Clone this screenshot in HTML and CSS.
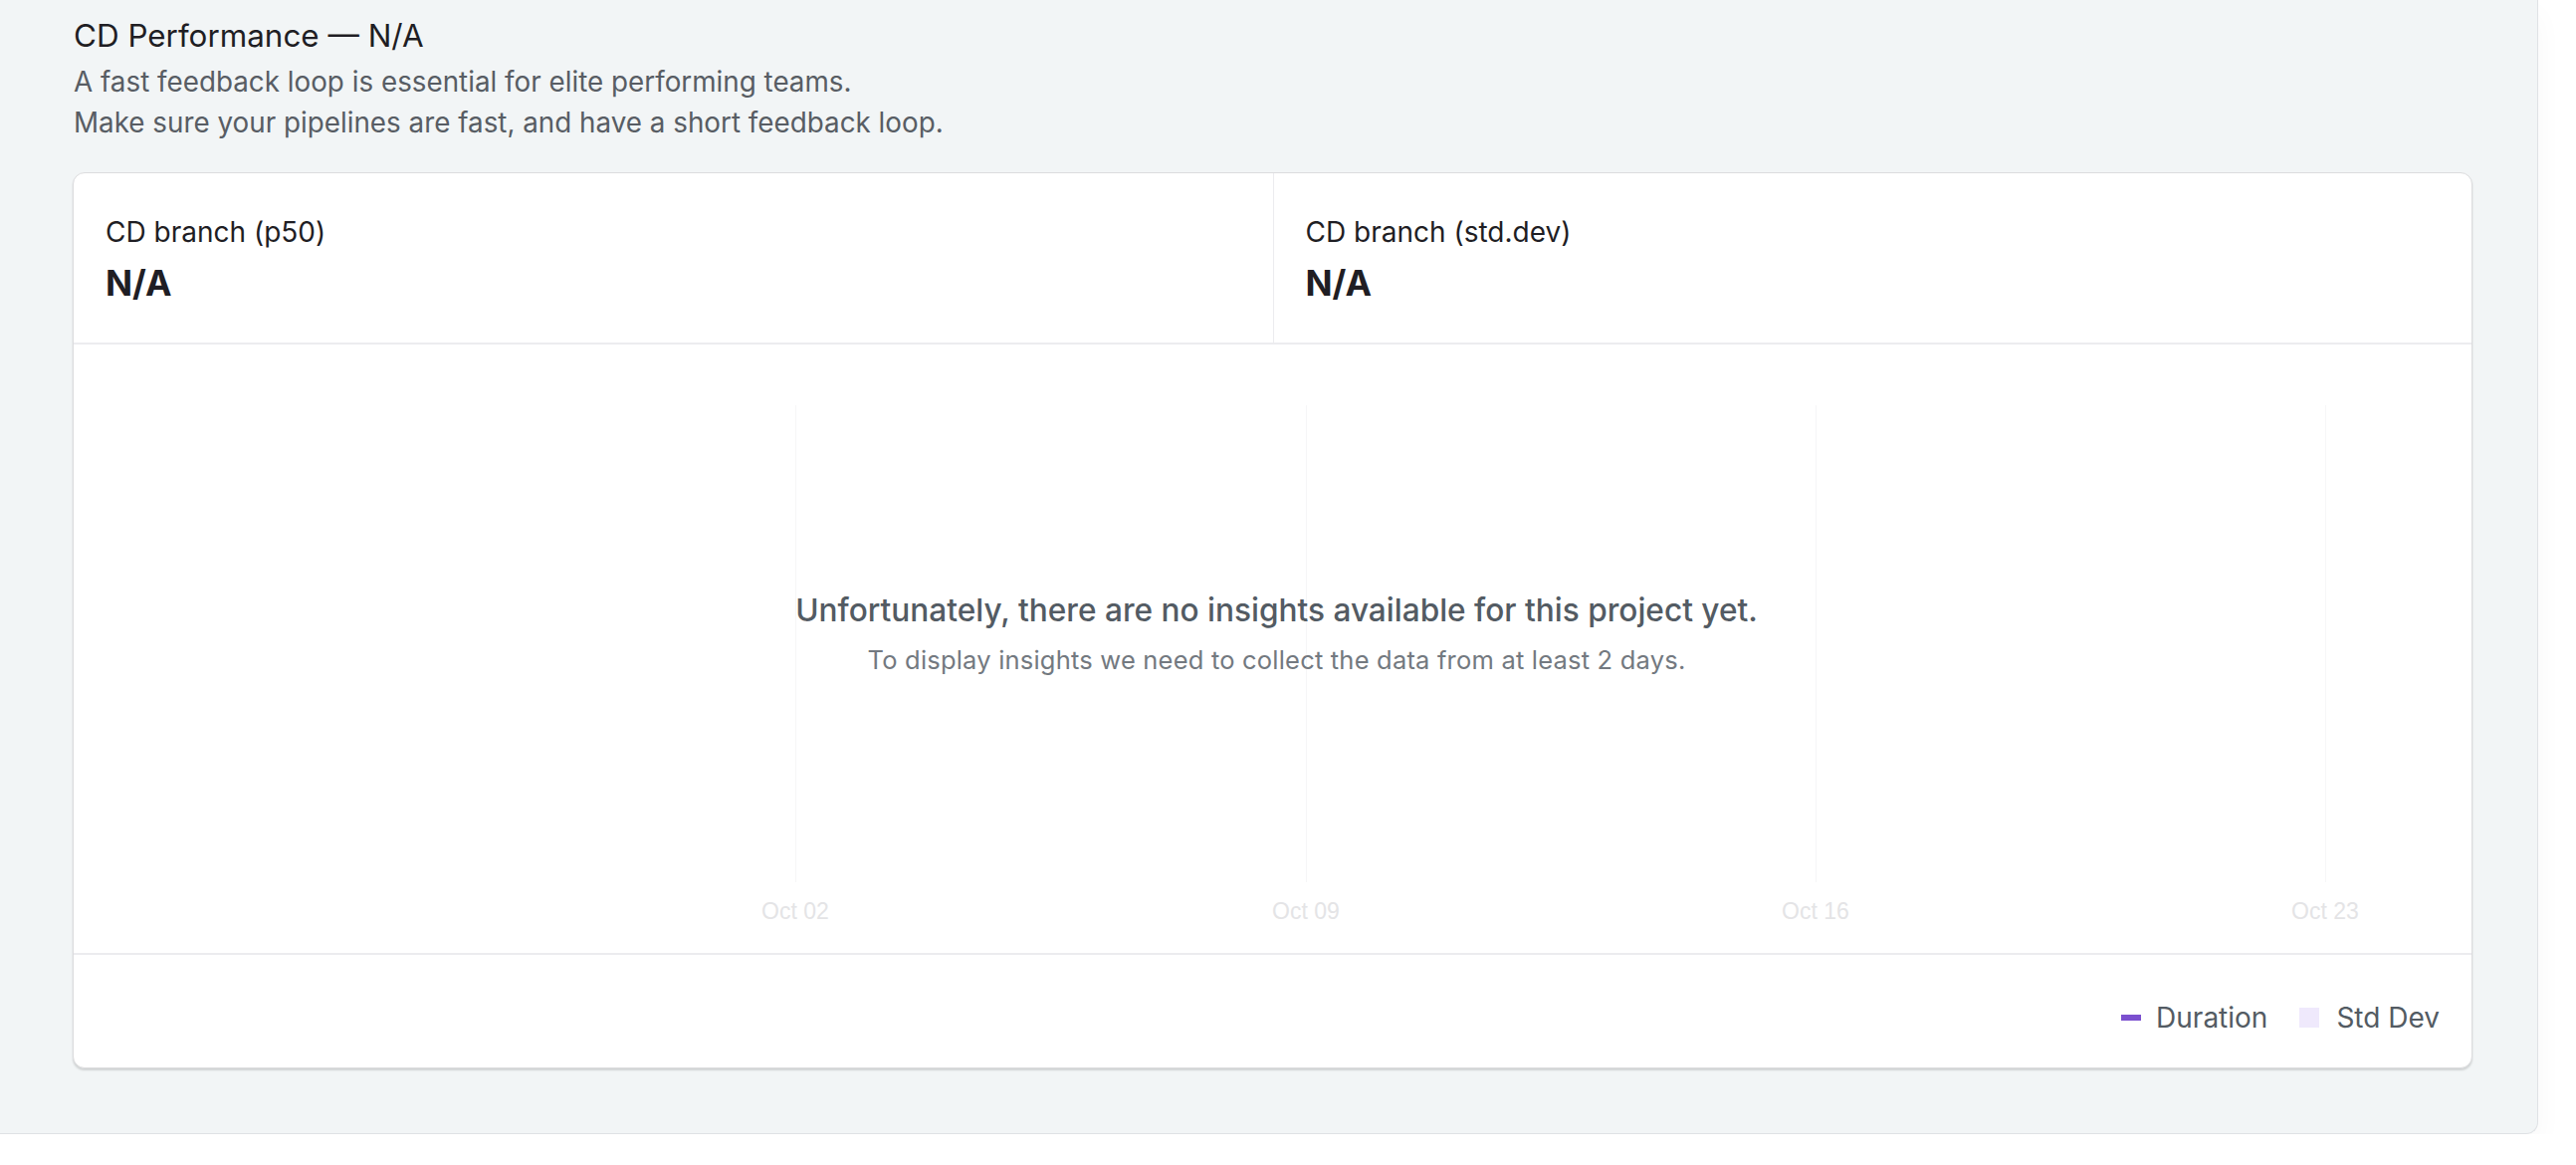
FILE: index.html
```html
<!DOCTYPE html>
<html lang="en">
<head>
<meta charset="utf-8">
<title>CD Performance</title>
<link rel="stylesheet" href="styles.css">
</head>
<body>
<section class="panel">
  <h2 class="title">CD Performance — N/A</h2>
  <p class="desc">A fast feedback loop is essential for elite performing teams.<br>Make sure your pipelines are fast, and have a short feedback loop.</p>
  <div class="card">
    <div class="stats">
      <div class="stat">
        <div class="stat-label">CD branch (p50)</div>
        <div class="stat-value">N/A</div>
      </div>
      <div class="stat">
        <div class="stat-label">CD branch (std.dev)</div>
        <div class="stat-value">N/A</div>
      </div>
    </div>
    <div class="chart">
      <svg class="chart-svg" width="2409" height="611" viewBox="0 0 2409 611">
        <g class="grid">
          <line x1="725.5" y1="61" x2="725.5" y2="540"></line>
          <line x1="1238.5" y1="61" x2="1238.5" y2="540"></line>
          <line x1="1750.5" y1="61" x2="1750.5" y2="540"></line>
          <line x1="2262.5" y1="61" x2="2262.5" y2="540"></line>
        </g>
        <g class="axis">
          <text x="725" y="577">Oct 02</text>
          <text x="1238" y="577">Oct 09</text>
          <text x="1750" y="577">Oct 16</text>
          <text x="2262" y="577">Oct 23</text>
        </g>
      </svg>
      <div class="empty">
        <div class="empty-title">Unfortunately, there are no insights available for this project yet.</div>
        <div class="empty-sub">To display insights we need to collect the data from at least 2 days.</div>
      </div>
    </div>
    <div class="footer">
      <div class="legend">
        <span class="legend-item"><span class="mark mark-line"></span>Duration</span>
        <span class="legend-item"><span class="mark mark-box"></span>Std Dev</span>
      </div>
    </div>
  </div>
</section>
</body>
</html>
```
FILE: styles.css
```css
html, body {
  margin: 0;
  padding: 0;
  background: #ffffff;
}
body {
  font-family: Inter, "Noto Sans", "Liberation Sans", sans-serif;
  color: #1f1e24;
}
.panel {
  box-sizing: border-box;
  width: 2550px;
  height: 1139px;
  padding: 18px 65px 0 73px;
  background: #f2f5f6;
  border-right: 1px solid #dfe2e5;
  border-bottom: 1px solid #dfe2e5;
  border-bottom-right-radius: 12px;
  box-shadow: 0 14px 30px rgba(0, 0, 0, 0.03);
}
.title {
  margin: 0;
  font-size: 31.4px;
  line-height: 36px;
  font-weight: 400;
  color: #1f1e24;
  padding-left: 1px;
}
.desc {
  margin: 8px 0 0;
  font-size: 27.8px;
  line-height: 41px;
  color: #585d64;
  padding-left: 1px;
}
.card {
  margin-top: 29px;
  background: #ffffff;
  border: 1px solid #dcdcde;
  border-radius: 12px;
  box-shadow: 0 2px 2px rgba(0, 0, 0, 0.14);
  overflow: hidden;
}
.stats {
  display: grid;
  grid-template-columns: 1fr 1fr;
  border-bottom: 2px solid #ececef;
}
.stat {
  padding: 44px 32px 39px;
}
.stat + .stat {
  border-left: 1px solid #ececef;
}
.stat-label {
  font-size: 28px;
  line-height: 30px;
  color: #1f1e24;
}
.stat-value {
  margin-top: 17px;
  font-size: 35.6px;
  line-height: 40px;
  font-weight: 700;
  color: #1f1e24;
}
.chart {
  position: relative;
  height: 611px;
}
.chart-svg {
  display: block;
}
.grid line {
  stroke: #f6f6f7;
  stroke-width: 1;
}
.axis text {
  font-family: "Liberation Sans", Arial, sans-serif;
  font-size: 23px;
  fill: #e4e4e6;
  text-anchor: middle;
}
.empty {
  position: absolute;
  inset: 0;
  display: flex;
  flex-direction: column;
  align-items: center;
  justify-content: center;
  padding: 0 0 31px 8px;
  gap: 17px;
}
.empty-title {
  font-size: 31.6px;
  line-height: 36px;
  font-weight: 500;
  color: #535b63;
}
.empty-sub {
  font-size: 25.5px;
  line-height: 30px;
  color: #737980;
  letter-spacing: 0.2px;
}
.footer {
  border-top: 2px solid #ececef;
  padding: 48px 32px 35px;
  display: flex;
  justify-content: flex-end;
}
.legend {
  display: flex;
  align-items: center;
  gap: 32px;
}
.legend-item {
  display: flex;
  align-items: center;
  font-size: 28px;
  line-height: 30px;
  color: #535b63;
}
.mark {
  display: inline-block;
  margin-right: 15px;
}
.mark-line {
  width: 20px;
  height: 6px;
  background: #7b50cf;
}
.mark-box {
  width: 20px;
  height: 20px;
  background: #efe9fc;
  margin-right: 17px;
}
```
